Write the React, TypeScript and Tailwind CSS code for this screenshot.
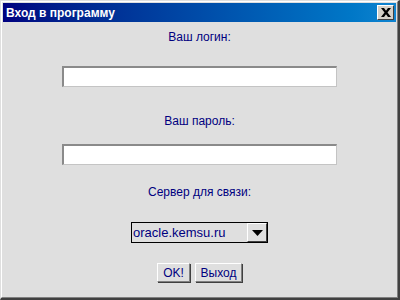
import React from "react";

export default function App() {
  const font = { fontFamily: '"Liberation Sans", Arial, sans-serif' };
  return (
    <div
      className="w-[400px] h-[300px] bg-[#dfdfdf] border-t border-l border-[#dfdfdf] border-r-2 border-b-2 border-r-[#404040] border-b-[#404040] overflow-hidden"
      style={font}
    >
      <div className="w-full h-full border-t border-l border-white border-r border-b border-r-[#808080] border-b-[#808080] p-[1px] flex flex-col">
        <div className="h-[19px] flex items-center justify-between bg-gradient-to-r from-[#000080] to-[#1084d0] pl-[3px] pr-[2px]">
          <span className="text-white font-bold text-[12px] leading-none">Вход в программу</span>
          <div className="w-[17px] h-[15px] bg-[#d4d0c8] border border-t-white border-l-white border-r-[#404040] border-b-[#404040] flex items-center justify-center">
            <svg width="10" height="9" viewBox="0 0 10 9">
              <path d="M0 0h3l2 2.8L7 0h3L6.5 4.5 10 9H7L5 6.2 3 9H0l3.5-4.5z" fill="#000" />
            </svg>
          </div>
        </div>
        <div className="flex flex-col items-center text-[12px] leading-[14px] text-[#000080]">
          <div className="mt-[8px] h-[14px]">Ваш логин:</div>
          <div className="mt-[22px] w-[275px] h-[21px] bg-white border-t-2 border-l-2 border-t-[#8a8a8a] border-l-[#8a8a8a] border-b border-r border-b-[#c4c4c4] border-r-[#c4c4c4]" />
          <div className="mt-[27px] h-[14px]">Ваш пароль:</div>
          <div className="mt-[16px] w-[275px] h-[21px] bg-white border-t-2 border-l-2 border-t-[#8a8a8a] border-l-[#8a8a8a] border-b border-r border-b-[#c4c4c4] border-r-[#c4c4c4]" />
          <div className="mt-[20px] h-[14px]">Сервер для связи:</div>
          <div className="mt-[23px] w-[137px] h-[21px] border border-black flex items-center justify-between pl-[1px] pr-0 bg-[#dfdfdf]">
            <span className="text-[13px]">oracle.kemsu.ru</span>
            <div className="w-[20px] h-[19px] bg-[#dfdfdf] border border-t-white border-l-white border-r-[#404040] border-b-[#404040] flex items-center justify-center">
              <svg width="11" height="6" viewBox="0 0 11 6">
                <path d="M0 0h11L5.5 6z" fill="#000" />
              </svg>
            </div>
          </div>
          <div className="mt-[20px] flex gap-[5px]">
            <button className="w-[33px] h-[19px] bg-[#dfdfdf] border border-t-white border-l-white border-r-[#808080] border-b-[#808080] shadow-[1px_1px_0_#404040] text-[12px] text-[#000080] flex items-center justify-center">
              OK!
            </button>
            <button className="w-[47px] h-[19px] bg-[#dfdfdf] border border-t-white border-l-white border-r-[#808080] border-b-[#808080] shadow-[1px_1px_0_#404040] text-[12px] text-[#000080] flex items-center justify-center">
              Выход
            </button>
          </div>
        </div>
      </div>
    </div>
  );
}
